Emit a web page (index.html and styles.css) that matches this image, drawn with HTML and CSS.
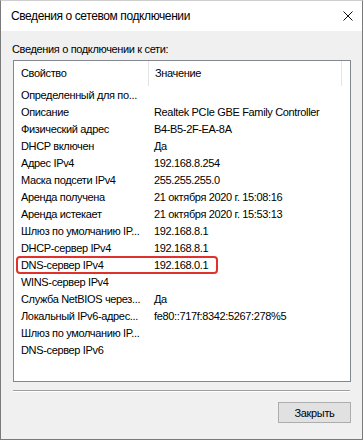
FILE: index.html
```html
<!DOCTYPE html>
<html lang="ru">
<head>
  <meta charset="UTF-8" />
  <title>Сведения о сетевом подключении</title>
  <link rel="stylesheet" href="styles.css">
</head>
<body>
  <div class="window">
    <div class="title-bar">
      <span class="title">Сведения о сетевом подключении</span>
      <span class="close-btn">
        <svg width="10" height="10" viewBox="0 0 10 10">
          <path d="M0.5 0.5 L9.5 9.5 M9.5 0.5 L0.5 9.5" stroke="#111" stroke-width="1" fill="none"/>
        </svg>
      </span>
    </div>

    <div class="content">
      <div class="group-label">Сведения о подключении к сети:</div>

      <div class="list-view">
        <div class="list-header">
          <div class="col-prop">Свойство</div>
          <div class="col-val">Значение</div>
        </div>
        <div class="list-rows">
          <div class="row"><div class="col-prop">Определенный для по...</div><div class="col-val"></div></div>
          <div class="row"><div class="col-prop">Описание</div><div class="col-val">Realtek PCIe GBE Family Controller</div></div>
          <div class="row"><div class="col-prop">Физический адрес</div><div class="col-val">B4-B5-2F-EA-8A</div></div>
          <div class="row"><div class="col-prop">DHCP включен</div><div class="col-val">Да</div></div>
          <div class="row"><div class="col-prop">Адрес IPv4</div><div class="col-val">192.168.8.254</div></div>
          <div class="row"><div class="col-prop">Маска подсети IPv4</div><div class="col-val">255.255.255.0</div></div>
          <div class="row"><div class="col-prop">Аренда получена</div><div class="col-val">21 октября 2020 г. 15:08:16</div></div>
          <div class="row"><div class="col-prop">Аренда истекает</div><div class="col-val">21 октября 2020 г. 15:53:13</div></div>
          <div class="row"><div class="col-prop">Шлюз по умолчанию IP...</div><div class="col-val">192.168.8.1</div></div>
          <div class="row"><div class="col-prop">DHCP-сервер IPv4</div><div class="col-val">192.168.8.1</div></div>
          <div class="row marked"><div class="col-prop">DNS-сервер IPv4</div><div class="col-val">192.168.0.1</div></div>
          <div class="row"><div class="col-prop">WINS-сервер IPv4</div><div class="col-val"></div></div>
          <div class="row"><div class="col-prop">Служба NetBIOS через...</div><div class="col-val">Да</div></div>
          <div class="row"><div class="col-prop">Локальный IPv6-адрес...</div><div class="col-val">fe80::717f:8342:5267:278%5</div></div>
          <div class="row"><div class="col-prop">Шлюз по умолчанию IP...</div><div class="col-val"></div></div>
          <div class="row"><div class="col-prop">DNS-сервер IPv6</div><div class="col-val"></div></div>
        </div>
      </div>

      <div class="separator"></div>

      <div class="buttons">
        <button class="btn">Закрыть</button>
      </div>
    </div>
  </div>
</body>
</html>
```

FILE: styles.css
```css
body {
  margin: 0;
  font-family: 'Liberation Sans', Arial, sans-serif;
  font-size: 11px;
  letter-spacing: -0.35px;
  color: #000;
  background: #fff;
}

.window {
  width: 363px;
  height: 440px;
  box-sizing: border-box;
  border: 1px solid #7a7a7a;
  border-top-color: #cfcfcf;
  display: flex;
  flex-direction: column;
  background: #f0f0f0;
}

.title-bar {
  height: 30px;
  background: #fff;
  display: flex;
  align-items: center;
  justify-content: space-between;
  padding: 0 9px 0 10px;
  flex-shrink: 0;
}

.title {
  font-size: 12px;
  letter-spacing: -0.4px;
  line-height: 16px;
}

.close-btn {
  display: flex;
  width: 10px;
  height: 10px;
  margin-top: -1px;
}

.content {
  flex: 1;
  padding: 10px 10px 0 11px;
  display: flex;
  flex-direction: column;
}

.group-label {
  line-height: 17px;
  margin-bottom: 2px;
}

.list-view {
  width: 338px;
  height: 322px;
  box-sizing: border-box;
  border: 1px solid #828790;
  background: #fff;
  margin-left: 1px;
}

.list-header {
  display: flex;
  height: 26px;
}

.list-header .col-prop {
  border-right: 1px solid #e5e5e5;
  height: 25px;
  line-height: 25px;
}

.list-header .col-val {
  height: 25px;
  line-height: 25px;
  border-right: 1px solid #e5e5e5;
  width: 186px;
}

.col-prop {
  width: 127px;
  padding-left: 7px;
  flex-shrink: 0;
  white-space: nowrap;
  overflow: hidden;
}

.col-val {
  padding-left: 6px;
  white-space: nowrap;
}

.row {
  display: flex;
  height: 17px;
  line-height: 17px;
  position: relative;
}

.row.marked::after {
  content: "";
  position: absolute;
  left: 2px;
  top: -1px;
  width: 202px;
  height: 18px;
  box-sizing: border-box;
  border: 2px solid #e0322d;
  border-radius: 4px;
}

.separator {
  width: 337px;
  margin: 8px 0 0 1px;
  border-top: 1px solid #a0a0a0;
  border-bottom: 1px solid #fff;
}

.buttons {
  display: flex;
  justify-content: flex-end;
  padding-top: 10px;
}

.btn {
  width: 73px;
  height: 21px;
  font-family: inherit;
  font-size: 11px;
  letter-spacing: -0.35px;
  background: #e1e1e1;
  border: 1px solid #adadad;
  color: #000;
  padding: 0;
  margin-right: 1px;
}
```
